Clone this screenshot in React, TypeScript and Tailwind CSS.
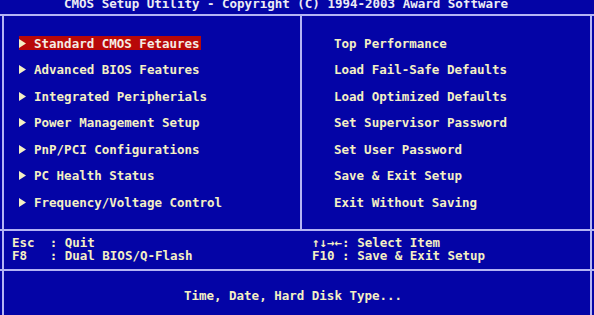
import React from 'react';

const leftItems = [
  'Standard CMOS Fetaures',
  'Advanced BIOS Features',
  'Integrated Peripherials',
  'Power Management Setup',
  'PnP/PCI Configurations',
  'PC Health Status',
  'Frequency/Voltage Control',
];

const rightItems = [
  'Top Performance',
  'Load Fail-Safe Defaults',
  'Load Optimized Defaults',
  'Set Supervisor Password',
  'Set User Password',
  'Save & Exit Setup',
  'Exit Without Saving',
];

const Arrow = () => (
  <svg width="7" height="9" viewBox="0 0 7 9" className="shrink-0">
    <polygon points="0,0 7,4.5 0,9" fill="#f4f0c4" />
  </svg>
);

const Line = () => <div className="h-[2px] w-full bg-[#b4b4f4]" />;

export default function App() {
  return (
    <div className="w-[594px] h-[315px] overflow-hidden bg-[#0404a6] text-[#f4f0c4] font-['DejaVu_Sans_Mono',monospace] font-bold text-[12.5px] leading-[13px] whitespace-pre">
      {/* title */}
      <div className="h-[14px] overflow-hidden">
        <div className="-mt-[3px] pl-[64px] text-[#ececf4]">
          CMOS Setup Utility - Copyright (C) 1994-2003 Award Software
        </div>
      </div>
      <Line />

      {/* menu */}
      <div className="mx-[2px] border-x-2 border-[#b4b4f4] h-[213px] grid grid-cols-[298px_1fr]">
        <div className="border-r-2 border-[#b4b4f4] pt-[14px]">
          {leftItems.map((item, i) => (
            <div key={item} className="h-[26.5px] flex items-center pl-[15px]">
              <div
                className={
                  i === 0
                    ? 'flex items-center h-[14px] bg-[#b80808] text-[#f4ece4] pr-[1px]'
                    : 'flex items-center h-[14px]'
                }
              >
                <div className="w-[15px] flex items-center">
                  <Arrow />
                </div>
                <span>{item}</span>
              </div>
            </div>
          ))}
        </div>
        <div className="pt-[14px] pl-[32px]">
          {rightItems.map((item) => (
            <div key={item} className="h-[26.5px] flex items-center">
              {item}
            </div>
          ))}
        </div>
      </div>
      <Line />

      {/* key help */}
      <div className="mx-[2px] border-x-2 border-[#b4b4f4] h-[38px] grid grid-cols-[298px_1fr] pt-[5px]">
        <div className="pl-[8px]">
          <div>Esc  : Quit</div>
          <div>F8   : Dual BIOS/Q-Flash</div>
        </div>
        <div className="pl-[10px]">
          <div>↑↓→←: Select Item</div>
          <div>F10 : Save &amp; Exit Setup</div>
        </div>
      </div>
      <Line />

      {/* description */}
      <div className="mx-[2px] border-x-2 border-[#b4b4f4] h-[60px] pt-[18px] pr-[8px] text-center">
        Time, Date, Hard Disk Type...
      </div>
    </div>
  );
}
